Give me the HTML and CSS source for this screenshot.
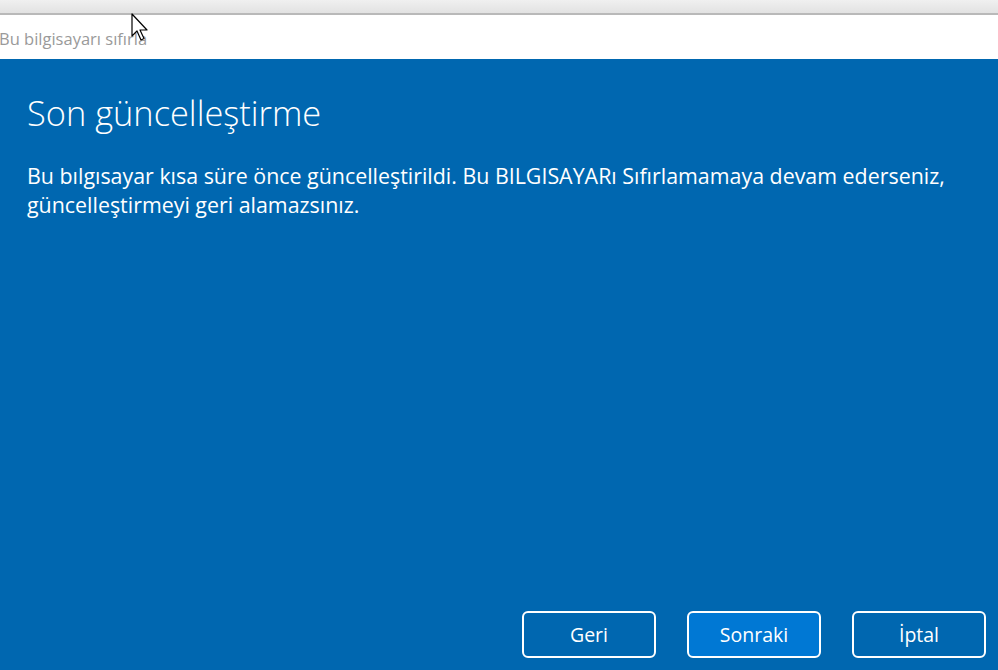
FILE: index.html
```html
<!DOCTYPE html>
<html lang="tr">

<head>
    <meta charset="UTF-8">
    <meta name="viewport" content="width=device-width, initial-scale=1.0">
    <title>Bu bilgisayarı sıfırla</title>
    <link rel="stylesheet" href="styles.css">
</head>

<body>

    <div class="topstrip"></div>

    <div class="titlebar">
        <span class="title">Bu bilgisayarı sıfırla</span>
    </div>

    <div class="panel">
        <h1>Son güncelleştirme</h1>
        <p class="msg">Bu bılgısayar kısa süre önce güncelleştirildi. Bu BILGISAYARı Sıfırlamamaya devam ederseniz,
            güncelleştirmeyi geri alamazsınız.</p>

        <div class="buttons">
            <button class="btn">Geri</button>
            <button class="btn primary">Sonraki</button>
            <button class="btn">İptal</button>
        </div>
    </div>

    <!-- fare imleci -->
    <svg class="cursor" width="20" height="28" viewBox="0 0 20 28">
        <path d="M1 1 L1 23 L6 18 L10 27 L13 25.5 L9 17 L16 17 Z" fill="#fff" stroke="#000" stroke-width="1.2" stroke-linejoin="round"/>
    </svg>

</body>

</html>
```

FILE: styles.css
```css
* {
    box-sizing: border-box;
}

html,
body {
    height: 100%;
}

body {
    margin: 0;
    display: flex;
    flex-direction: column;
    font-family: "Open Sans", "Noto Sans", sans-serif;
    background-color: #fff;
    overflow: hidden;
}

.topstrip {
    height: 15px;
    background: linear-gradient(#f0f0f0, #e2e2e2);
    border-bottom: 2px solid #b9b9b9;
    flex-shrink: 0;
}

.titlebar {
    height: 44px;
    flex-shrink: 0;
    display: flex;
    align-items: center;
    padding-top: 2px;
    background-color: #fff;
    overflow: hidden;
}

.title {
    margin-left: -1px;
    font-size: 16.5px;
    color: #9a9a9a;
    white-space: nowrap;
}

.panel {
    flex: 1;
    display: flex;
    flex-direction: column;
    background-color: #0067b0;
    color: #fff;
    padding: 32px 12px 12px 27px;
}

h1 {
    margin: 0;
    font-size: 34.4px;
    font-weight: 300;
    line-height: 44px;
}

.msg {
    margin: 26px 0 0;
    font-size: 21.4px;
    line-height: 29px;
    max-width: 940px;
}

.buttons {
    margin-top: auto;
    display: flex;
    justify-content: flex-end;
    gap: 31px;
}

.btn {
    width: 134px;
    height: 47px;
    background-color: transparent;
    color: #fff;
    border: 2px solid #fff;
    border-radius: 6px;
    font-family: inherit;
    font-size: 19.5px;
}

.primary {
    background-color: #0078d4;
}

.cursor {
    position: absolute;
    left: 131px;
    top: 13px;
}
```
